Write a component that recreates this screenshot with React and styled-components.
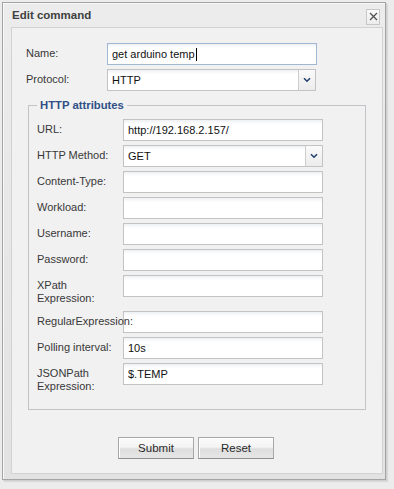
import React from "react";
import styled, { createGlobalStyle } from "styled-components";

const GlobalStyle = createGlobalStyle`
  html, body { margin: 0; padding: 0; }
  body {
    background: #ececec;
    font-family: "Liberation Sans", Arial, sans-serif;
    font-size: 11px;
    color: #333;
  }
`;

const Page = styled.div`
  width: 394px;
  height: 489px;
  box-sizing: border-box;
  padding: 2px 0 0 2px;
  background: #ececec;
`;

const Window = styled.div`
  width: 384px;
  height: 478px;
  box-sizing: border-box;
  border: 1px solid #a4a4a4;
  background: linear-gradient(#ececec, #e2e2e2);
  box-shadow: 1px 1px 0 #d0d0d0, 2px 2px 1px #dadada, inset 1px 1px 0 #f8f8f8;
  display: flex;
  flex-direction: column;
  padding: 0 2px 5px 8px;
`;

const Header = styled.div`
  height: 24px;
  display: flex;
  align-items: center;
  justify-content: space-between;
  padding-right: 3px;
`;

const Title = styled.div`
  font-weight: bold;
  font-size: 11.5px;
  color: #404040;
  padding-left: 1px;
  margin-top: -1px;
`;

const CloseButton = styled.div`
  width: 14px;
  height: 16px;
  box-sizing: border-box;
  border: 1px solid #c8c8c8;
  background: linear-gradient(#fafafa, #ececec);
  display: flex;
  align-items: center;
  justify-content: center;
  margin-top: 3px;
`;

const Body = styled.div`
  flex: 1;
  border: 1px solid #d2d2d2;
  background: #f1f1f1;
  padding: 15px 16px 0 14px;
  display: flex;
  flex-direction: column;
`;

const Row = styled.div`
  display: flex;
  align-items: flex-start;
  margin-bottom: 4px;
`;

const Label = styled.div`
  width: ${(p) => p.$w}px;
  flex: none;
  padding: 4px 0 2px;
  line-height: 13px;
  color: #383838;
  white-space: ${(p) => (p.$nowrap ? "nowrap" : "normal")};
  position: relative;
  z-index: ${(p) => (p.$nowrap ? 1 : 0)};
`;

const TextBox = styled.div`
  width: ${(p) => p.$w}px;
  height: 22px;
  box-sizing: border-box;
  flex: none;
  border: 1px solid ${(p) => (p.$focus ? "#9fb7d0" : "#c3c3c3")};
  background: linear-gradient(#eef0f3 0, #ffffff 4px, #ffffff 100%);
  padding: 0 4px;
  display: flex;
  align-items: center;
  color: #111;
  font-size: 11px;
  position: relative;
`;

const Caret = styled.span`
  display: inline-block;
  width: 1px;
  height: 13px;
  background: #000;
  margin-left: 1px;
`;

const SelectBox = styled(TextBox)`
  padding: 0 0 0 4px;
  justify-content: space-between;
`;

const Trigger = styled.div`
  width: 17px;
  height: 100%;
  box-sizing: border-box;
  border-left: 1px solid #cdcdcd;
  background: linear-gradient(#fafafa, #ececec);
  display: flex;
  align-items: center;
  justify-content: center;
`;

const Fieldset = styled.fieldset`
  margin: 2px 0 0 2px;
  border: 1px solid #c4c4c8;
  padding: 6px 8px 10px 8px;
  min-width: 0;
`;

const Legend = styled.legend`
  padding: 0 3px;
  font-weight: bold;
  font-size: 11.3px;
  line-height: 16px;
  color: #2f4f86;
`;

const ButtonBar = styled.div`
  display: flex;
  justify-content: center;
  gap: 4px;
  margin-top: 27px;
`;

const Button = styled.button`
  width: 76px;
  height: 22px;
  box-sizing: border-box;
  border: 1px solid #a8a8a8;
  border-bottom-color: #8f8f8f;
  background: linear-gradient(#fbfbfb 0, #f4f4f4 45%, #dedede 55%, #e6e6e6 100%);
  font-family: "Liberation Sans", Arial, sans-serif;
  font-size: 11.5px;
  color: #2a2a2a;
  padding: 0;
  box-shadow: inset 1px 1px 0 #ffffff;
`;

function Chevron() {
  return (
    <svg width="8" height="6" viewBox="0 0 8 6">
      <path d="M1 1.2 L4 4.2 L7 1.2" fill="none" stroke="#24406e" strokeWidth="1.6" />
    </svg>
  );
}

function CloseIcon() {
  return (
    <svg width="9" height="9" viewBox="0 0 9 9">
      <path d="M1 1 L8 8 M8 1 L1 8" stroke="#505050" strokeWidth="1.3" />
    </svg>
  );
}

function Field({ label, value, w, lw, select, focus, caret, nowrap }) {
  return (
    <Row>
      <Label $w={lw} $nowrap={nowrap}>{label}</Label>
      {select ? (
        <SelectBox $w={w}>
          <span>{value}</span>
          <Trigger>
            <Chevron />
          </Trigger>
        </SelectBox>
      ) : (
        <TextBox $w={w} $focus={focus}>
          {value}
          {caret && <Caret />}
        </TextBox>
      )}
    </Row>
  );
}

const attrs = [
  { label: "URL:", value: "http://192.168.2.157/" },
  { label: "HTTP Method:", value: "GET", select: true },
  { label: "Content-Type:", value: "" },
  { label: "Workload:", value: "" },
  { label: "Username:", value: "" },
  { label: "Password:", value: "" },
  { label: "XPath Expression:", value: "" },
  { label: "RegularExpression:", value: "", nowrap: true },
  { label: "Polling interval:", value: "10s" },
  { label: "JSONPath Expression:", value: "$.TEMP" },
];

export default function App() {
  return (
    <Page>
      <GlobalStyle />
      <Window>
        <Header>
          <Title>Edit command</Title>
          <CloseButton>
            <CloseIcon />
          </CloseButton>
        </Header>
        <Body>
          <Field label="Name:" value="get arduino temp" w={210} lw={81} focus caret />
          <Field label="Protocol:" value="HTTP" w={209} lw={81} select />
          <Fieldset>
            <Legend>HTTP attributes</Legend>
            {attrs.map((a) => (
              <Field key={a.label} {...a} w={200} lw={86} />
            ))}
          </Fieldset>
          <ButtonBar>
            <Button>Submit</Button>
            <Button>Reset</Button>
          </ButtonBar>
        </Body>
      </Window>
    </Page>
  );
}
